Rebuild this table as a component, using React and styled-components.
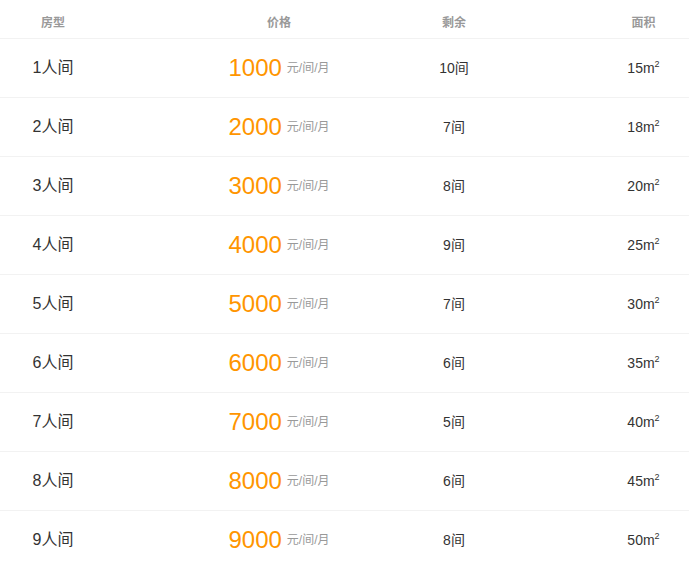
import React from "react";
import styled, { createGlobalStyle } from "styled-components";

const GlobalStyle = createGlobalStyle`
	html, body {
		margin: 0;
		padding: 0;
		background: #ffffff;
	}
	body {
		font-family: "Liberation Sans", "Noto Sans CJK SC", sans-serif;
	}
`;

const rooms = [
	{ type: "1人间", price: 1000, left: 10, area: 15 },
	{ type: "2人间", price: 2000, left: 7, area: 18 },
	{ type: "3人间", price: 3000, left: 8, area: 20 },
	{ type: "4人间", price: 4000, left: 9, area: 25 },
	{ type: "5人间", price: 5000, left: 7, area: 30 },
	{ type: "6人间", price: 6000, left: 6, area: 35 },
	{ type: "7人间", price: 7000, left: 5, area: 40 },
	{ type: "8人间", price: 8000, left: 6, area: 45 },
	{ type: "9人间", price: 9000, left: 8, area: 50 },
];

const TableContainer = styled.div`
	width: 100%;
	display: flex;
	flex-direction: column;
`;

const Row = styled.div`
	display: grid;
	grid-template-columns: 106px 290px 116px 1fr;
	align-items: center;
	height: ${(props) => (props.$header ? "30px" : "58px")};
	padding-top: ${(props) => (props.$header ? "8px" : "0")};
	border-bottom: 1px solid #f2f2f2;
	box-sizing: content-box;
`;

const Cell = styled.div`
	display: flex;
	justify-content: center;
	align-items: center;
	line-height: 1.2;
	padding-left: ${(props) => props.$pl || 0}px;
`;

const HeaderText = styled.span`
	font-size: 12px;
	font-weight: bold;
	color: #999999;
`;

const TypeText = styled.span`
	font-size: 16px;
	color: #333333;
`;

const PriceNumber = styled.span`
	font-size: 24px;
	color: #ff9500;
`;

const PriceUnit = styled.span`
	font-size: 12px;
	color: #999999;
	margin-left: 5px;
`;

const PlainText = styled.span`
	font-size: 14px;
	color: #333333;

	sup {
		font-size: 9px;
		vertical-align: 6px;
		line-height: 0;
	}
`;

const pads = [0, 56, 0, 86];

const App = () => {
	return (
		<TableContainer>
			<GlobalStyle />
			<Row $header>
				{["房型", "价格", "剩余", "面积"].map((title, i) => (
					<Cell key={title} $pl={pads[i]}>
						<HeaderText>{title}</HeaderText>
					</Cell>
				))}
			</Row>
			{rooms.map((room) => (
				<Row key={room.type}>
					<Cell>
						<TypeText>{room.type}</TypeText>
					</Cell>
					<Cell $pl={pads[1]}>
						<PriceNumber>{room.price}</PriceNumber>
						<PriceUnit>元/间/月</PriceUnit>
					</Cell>
					<Cell>
						<PlainText>{room.left}间</PlainText>
					</Cell>
					<Cell $pl={pads[3]}>
						<PlainText>
							{room.area}m<sup>2</sup>
						</PlainText>
					</Cell>
				</Row>
			))}
		</TableContainer>
	);
};

export default App;
